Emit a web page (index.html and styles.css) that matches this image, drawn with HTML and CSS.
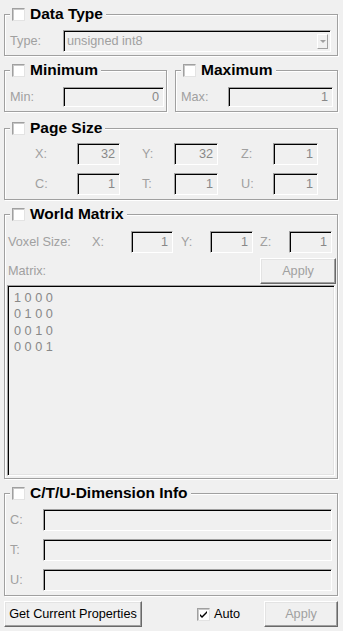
FILE: index.html
```html
<!DOCTYPE html>
<html>
<head>
<meta charset="utf-8">
<link rel="stylesheet" href="styles.css">
</head>
<body>
<div class="panel">
  <section class="group g-type">
    <div class="title"><span class="cb"></span><span>Data Type</span></div>
    <div class="row r-type">
      <span class="lbl w53">Type:</span>
      <div class="combo"><span class="combo-text">unsigned int8</span><span class="combo-btn"><span class="tri"></span></span></div>
    </div>
  </section>

  <div class="pair">
    <section class="group g-min">
      <div class="title"><span class="cb"></span><span>Minimum</span></div>
      <div class="row r-min">
        <span class="lbl w53">Min:</span>
        <div class="field f20">0</div>
      </div>
    </section>
    <section class="group g-max">
      <div class="title"><span class="cb"></span><span>Maximum</span></div>
      <div class="row r-max">
        <span class="lbl w47">Max:</span>
        <div class="field f20">1</div>
      </div>
    </section>
  </div>

  <section class="group g-page">
    <div class="title"><span class="cb"></span><span>Page Size</span></div>
    <div class="ps-grid">
      <span class="lbl p30">X:</span><div class="field">32</div>
      <span class="lbl p22">Y:</span><div class="field">32</div>
      <span class="lbl p23">Z:</span><div class="field">1</div>
      <span class="lbl p30">C:</span><div class="field">1</div>
      <span class="lbl p22">T:</span><div class="field">1</div>
      <span class="lbl p23">U:</span><div class="field">1</div>
    </div>
  </section>

  <section class="group g-world">
    <div class="title"><span class="cb"></span><span>World Matrix</span></div>
    <div class="wm-grid">
      <span class="lbl">Voxel Size:</span>
      <span class="lbl">X:</span><div class="field">1</div>
      <span class="lbl p8">Y:</span><div class="field">1</div>
      <span class="lbl p7">Z:</span><div class="field">1</div>
    </div>
    <div class="wm-row2">
      <span class="lbl">Matrix:</span>
      <button class="btn btn-apply-wm" disabled>Apply</button>
    </div>
    <div class="matrix">1 0 0 0<br>0 1 0 0<br>0 0 1 0<br>0 0 0 1</div>
  </section>

  <section class="group g-ctu">
    <div class="title"><span class="cb"></span><span>C/T/U-Dimension Info</span></div>
    <div class="ctu-row"><span class="lbl w33">C:</span><div class="field"></div></div>
    <div class="ctu-row"><span class="lbl w33">T:</span><div class="field"></div></div>
    <div class="ctu-row"><span class="lbl w33">U:</span><div class="field"></div></div>
  </section>

  <div class="bottom">
    <button class="btn btn-get">Get Current Properties</button>
    <label class="auto"><span class="cb checked"><svg width="9" height="9" viewBox="0 0 9 9"><path d="M1 4 L3 6 L8 1 L8 3 L3 8 L1 6 Z" fill="#000"/></svg></span><span>Auto</span></label>
    <button class="btn btn-apply" disabled>Apply</button>
  </div>
</div>
</body>
</html>
```
FILE: styles.css
```css
* { box-sizing: border-box; }

body {
  margin: 0;
  background: #f0f0f0;
  font-family: "Liberation Sans", Arial, sans-serif;
  font-size: 12.7px;
  color: #000;
  width: 343px;
  height: 631px;
  overflow: hidden;
}

.panel {
  display: flex;
  flex-direction: column;
  padding: 0 5px 0 4px;
}

.group {
  display: flex;
  flex-direction: column;
  margin-top: 14px;
  border: 1px solid #a0a0a0;
  box-shadow: inset 1px 1px 0 #fff, 1px 1px 0 #fff;
}

.title {
  align-self: flex-start;
  display: flex;
  align-items: center;
  gap: 5px;
  height: 18px;
  margin: -10px 0 0 5px;
  padding: 0 3px 0 2px;
  background: #f0f0f0;
  font-weight: bold;
  font-size: 15.5px;
}

.cb {
  display: flex;
  align-items: center;
  justify-content: center;
  width: 13px;
  height: 13px;
  flex: none;
  background: #fff;
  border: 1px solid;
  border-color: #a0a0a0 #e3e3e3 #e3e3e3 #a0a0a0;
  box-shadow: inset 1px 1px 0 #c8c8c8;
}

.lbl {
  color: #a0a0a0;
  white-space: nowrap;
}

.w53 { width: 53px; flex: none; }
.w47 { width: 47px; flex: none; }
.w33 { width: 33px; flex: none; }
.p30 { padding-left: 30px; }
.p22 { padding-left: 22px; }
.p23 { padding-left: 23px; }
.p8 { padding-left: 8px; }
.p7 { padding-left: 7px; }

.field {
  height: 22px;
  border: 1px solid;
  border-color: #a0a0a0 #fff #fff #a0a0a0;
  box-shadow: inset 1px 1px 0 #000;
  background: #f0f0f0;
  color: #888;
  text-align: right;
  padding-right: 4px;
  line-height: 20px;
}

.f20 { height: 20px; line-height: 18px; }

.row {
  display: flex;
  align-items: center;
}

.r-type { padding: 7px 6px 3px 5px; }

.combo {
  flex: 1;
  height: 22px;
  display: flex;
  align-items: center;
  border: 1px solid;
  border-color: #a0a0a0 #fff #fff #a0a0a0;
  box-shadow: inset 1px 1px 0 #000;
  padding: 0 2px 0 3px;
}

.combo-text {
  flex: 1;
  color: #a0a0a0;
}

.combo-btn {
  width: 11px;
  height: 15px;
  display: flex;
  align-items: center;
  justify-content: center;
  border: 1px solid;
  border-color: #fff #a0a0a0 #a0a0a0 #fff;
}

.tri {
  width: 0;
  height: 0;
  border-left: 3px solid transparent;
  border-right: 3px solid transparent;
  border-top: 3px solid #a0a0a0;
}

.pair {
  display: flex;
  gap: 8px;
}

.pair .group { flex: 1; }

.r-min { padding: 8px 2px 4px 5px; }
.r-max { padding: 8px 4px 4px 5px; }
.r-min .field, .r-max .field { flex: 1; }

.g-page { margin-top: 16px; }

.ps-grid {
  display: grid;
  grid-template-columns: 72px 43px 54px 44px 55px 45px;
  grid-auto-rows: 22px;
  row-gap: 8px;
  align-items: center;
  padding: 6px 0 4px 0;
}

.wm-grid {
  display: grid;
  grid-template-columns: 84px 39px 42px 37px 43px 36px 43px;
  grid-auto-rows: 22px;
  align-items: center;
  padding: 8px 0 0 3px;
}

.wm-row2 {
  display: flex;
  align-items: center;
  justify-content: space-between;
  margin-top: 5px;
  padding: 0 1px 0 3px;
}

.btn {
  font-family: inherit;
  font-size: inherit;
  background: #f0f0f0;
  color: #000;
  border: 1px solid;
  border-color: #fff #696969 #696969 #fff;
  box-shadow: inset -1px -1px 0 #a0a0a0, inset 1px 1px 0 #e3e3e3;
  padding: 0;
  height: 26px;
}

.btn:disabled { color: #a0a0a0; }

.btn-apply-wm { width: 76px; }

.matrix {
  height: 191px;
  margin: 1px 2px 2px 2px;
  border: 1px solid;
  border-color: #a0a0a0 #fff #fff #a0a0a0;
  box-shadow: inset 1px 1px 0 #000, inset -1px -1px 0 #e3e3e3;
  padding: 4px 0 0 6px;
  color: #888;
  line-height: 16.3px;
}

.ctu-row {
  display: flex;
  align-items: center;
  padding: 0 5px 0 5px;
  margin-top: 8px;
}

.ctu-row .field { flex: 1; }

.g-ctu .ctu-row:nth-child(2) { margin-top: 7px; }
.g-ctu .ctu-row:last-child { margin-bottom: 4px; }

.bottom {
  display: flex;
  align-items: center;
  margin-top: 5px;
}

.btn-get { width: 138px; }

.auto {
  display: flex;
  align-items: center;
  gap: 4px;
  margin-left: 55px;
}

.btn-apply {
  width: 74px;
  margin-left: auto;
}
```
